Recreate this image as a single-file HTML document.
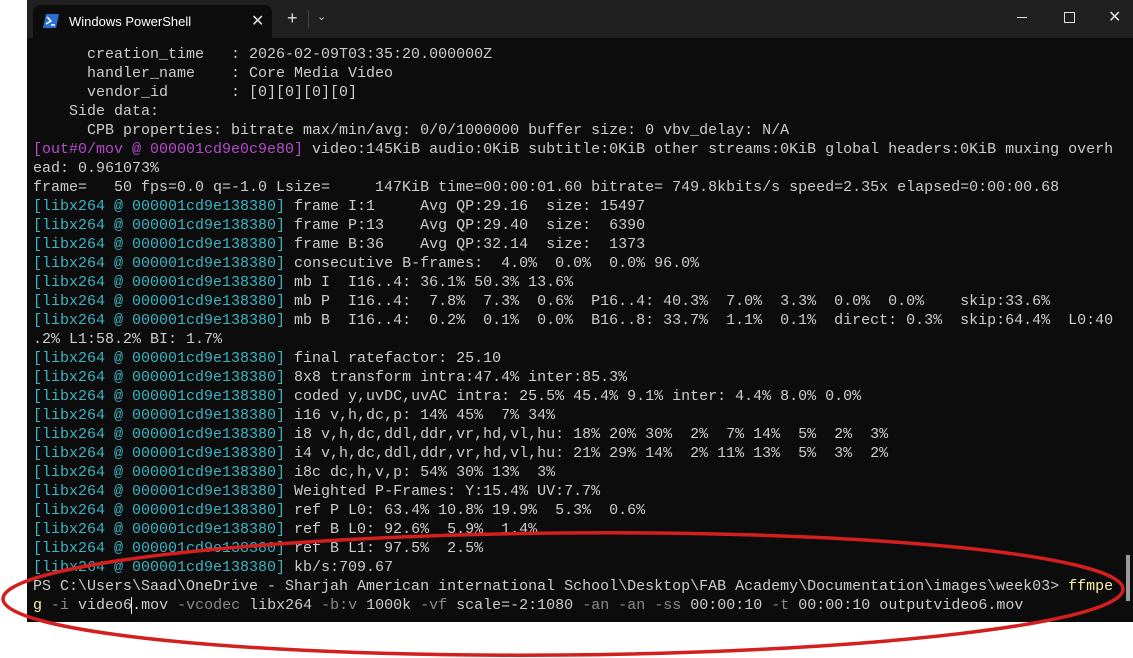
<!DOCTYPE html>
<html><head><meta charset="utf-8"><style>
body{margin:0;width:1133px;height:658px;background:#fff;position:relative;overflow:hidden;font-family:"Liberation Sans",sans-serif}
#win{position:absolute;left:27px;top:0;width:1106px;height:622px;background:#0c0c0c}
#tb{position:absolute;left:0;top:0;width:1106px;height:38px;background:#202020}
#tab{position:absolute;left:6px;top:5px;width:239px;height:33px;background:#0c0c0c;border-radius:7px 7px 0 0}
#tab .t{position:absolute;left:36px;top:9px;color:#fff;font-size:13px}
pre{position:absolute;left:33px;top:45px;margin:0;font-family:"Liberation Mono",monospace;font-size:15px;line-height:19px;color:#cccccc}
.c{color:#3bb4c4}.m{color:#b54bcb}.y{color:#f9f1a5}.g{color:#8a8a8a}
.cur{border-left:1.5px solid #eee;margin-left:-1px}
</style></head><body>
<div id="win">
<div id="tb">
<div id="tab">
<svg style="position:absolute;left:10px;top:9px" width="16" height="14" viewBox="0 0 16 14"><path d="M3 0H16L13 14H0Z" fill="#2a6fd0"/><path d="M4 3L8 7L3 10" stroke="#fff" stroke-width="1.5" fill="none"/><path d="M8 11H12" stroke="#fff" stroke-width="1.5"/></svg>
<span class="t">Windows PowerShell</span>
<span style="position:absolute;left:218px;top:6px;color:#ddd;font-size:16px">✕</span>
</div>
<span style="position:absolute;left:260px;top:8px;color:#ddd;font-size:18px">+</span>
<div style="position:absolute;left:281px;top:10px;width:1px;height:18px;background:#444"></div>
<span style="position:absolute;left:290px;top:10px;color:#ccc;font-size:11px">⌄</span>
<div style="position:absolute;left:990px;top:17px;width:10px;height:1px;background:#ddd"></div>
<div style="position:absolute;left:1037px;top:12px;width:9px;height:9px;border:1px solid #ddd"></div>
<span style="position:absolute;left:1081px;top:7px;color:#ddd;font-size:16px">✕</span>
</div>
<div style="position:absolute;left:1099px;top:555px;width:4px;height:46px;background:#9a9a9a"></div>
</div>
<pre>      creation_time   : 2026-02-09T03:35:20.000000Z
      handler_name    : Core Media Video
      vendor_id       : [0][0][0][0]
    Side data:
      CPB properties: bitrate max/min/avg: 0/0/1000000 buffer size: 0 vbv_delay: N/A
<span class="m">[out#0/mov @ 000001cd9e0c9e80]</span> video:145KiB audio:0KiB subtitle:0KiB other streams:0KiB global headers:0KiB muxing overh
ead: 0.961073%
frame=   50 fps=0.0 q=-1.0 Lsize=     147KiB time=00:00:01.60 bitrate= 749.8kbits/s speed=2.35x elapsed=0:00:00.68
<span class="c">[libx264 @ 000001cd9e138380]</span> frame I:1     Avg QP:29.16  size: 15497
<span class="c">[libx264 @ 000001cd9e138380]</span> frame P:13    Avg QP:29.40  size:  6390
<span class="c">[libx264 @ 000001cd9e138380]</span> frame B:36    Avg QP:32.14  size:  1373
<span class="c">[libx264 @ 000001cd9e138380]</span> consecutive B-frames:  4.0%  0.0%  0.0% 96.0%
<span class="c">[libx264 @ 000001cd9e138380]</span> mb I  I16..4: 36.1% 50.3% 13.6%
<span class="c">[libx264 @ 000001cd9e138380]</span> mb P  I16..4:  7.8%  7.3%  0.6%  P16..4: 40.3%  7.0%  3.3%  0.0%  0.0%    skip:33.6%
<span class="c">[libx264 @ 000001cd9e138380]</span> mb B  I16..4:  0.2%  0.1%  0.0%  B16..8: 33.7%  1.1%  0.1%  direct: 0.3%  skip:64.4%  L0:40
.2% L1:58.2% BI: 1.7%
<span class="c">[libx264 @ 000001cd9e138380]</span> final ratefactor: 25.10
<span class="c">[libx264 @ 000001cd9e138380]</span> 8x8 transform intra:47.4% inter:85.3%
<span class="c">[libx264 @ 000001cd9e138380]</span> coded y,uvDC,uvAC intra: 25.5% 45.4% 9.1% inter: 4.4% 8.0% 0.0%
<span class="c">[libx264 @ 000001cd9e138380]</span> i16 v,h,dc,p: 14% 45%  7% 34%
<span class="c">[libx264 @ 000001cd9e138380]</span> i8 v,h,dc,ddl,ddr,vr,hd,vl,hu: 18% 20% 30%  2%  7% 14%  5%  2%  3%
<span class="c">[libx264 @ 000001cd9e138380]</span> i4 v,h,dc,ddl,ddr,vr,hd,vl,hu: 21% 29% 14%  2% 11% 13%  5%  3%  2%
<span class="c">[libx264 @ 000001cd9e138380]</span> i8c dc,h,v,p: 54% 30% 13%  3%
<span class="c">[libx264 @ 000001cd9e138380]</span> Weighted P-Frames: Y:15.4% UV:7.7%
<span class="c">[libx264 @ 000001cd9e138380]</span> ref P L0: 63.4% 10.8% 19.9%  5.3%  0.6%
<span class="c">[libx264 @ 000001cd9e138380]</span> ref B L0: 92.6%  5.9%  1.4%
<span class="c">[libx264 @ 000001cd9e138380]</span> ref B L1: 97.5%  2.5%
<span class="c">[libx264 @ 000001cd9e138380]</span> kb/s:709.67
PS C:\Users\Saad\OneDrive - Sharjah American international School\Desktop\FAB Academy\Documentation\images\week03&gt; <span class="y">ffmpe</span>
<span class="y">g</span> <span class="g">-i</span> video6<span class="cur"></span>.mov <span class="g">-vcodec</span> libx264 <span class="g">-b:v</span> 1000k <span class="g">-vf</span> scale=-2:1080 <span class="g">-an</span> <span class="g">-an</span> <span class="g">-ss</span> 00:00:10 <span class="g">-t</span> 00:00:10 outputvideo6.mov</pre>
<svg style="position:absolute;left:0;top:0" width="1133" height="658"><ellipse cx="563" cy="594" rx="560" ry="61" fill="none" stroke="#d41f1f" stroke-width="3.5" transform="rotate(-0.5 563 594)"/></svg>
</body></html>
